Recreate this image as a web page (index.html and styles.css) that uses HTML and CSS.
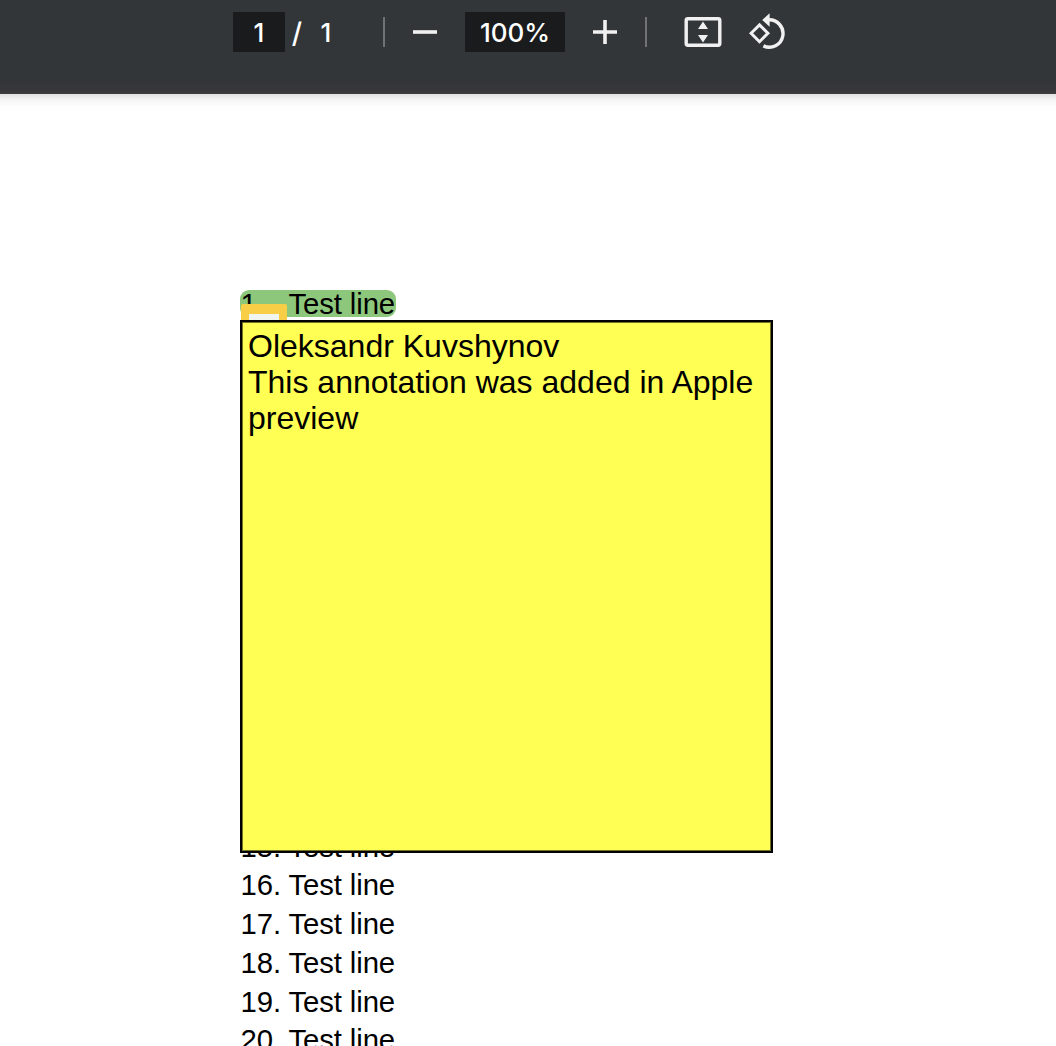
FILE: index.html
```
<!DOCTYPE html>
<html lang="en">
<head>
<meta charset="utf-8">
<title>PDF viewer</title>
<link rel="stylesheet" href="styles.css">
</head>
<body>
<header class="toolbar">
  <span class="field page-field">1</span>
  <span class="slash">/</span>
  <span class="page-total">1</span>
  <span class="separator separator-first"></span>
  <svg class="icon-minus" width="24" height="24" viewBox="0 0 24 24"><path d="M0 10.2h24v3.6H0z" fill="#f1f1f1"/></svg>
  <span class="field zoom-field">100%</span>
  <svg class="icon-plus" width="24" height="24" viewBox="0 0 24 24"><path d="M0 10.2h10.2V0h3.6v10.2H24v3.6H13.8V24h-3.6V13.8H0z" fill="#f1f1f1"/></svg>
  <span class="separator separator-second"></span>
  <svg class="icon-fit" width="38" height="30" viewBox="0 0 38 30"><rect x="2.2" y="1.8" width="33.6" height="26.4" rx="1.7" fill="none" stroke="#f1f1f1" stroke-width="3.4"/><path d="M19 4.5l5 7.5H14zM14 18h10l-5 7.5z" fill="#f1f1f1"/></svg>
  <svg class="icon-rotate" width="36" height="37" viewBox="0 0 36 37"><path d="M10.5 11.9l8.4 8.4-8.4 8.4-8.4-8.4z" fill="none" stroke="#f1f1f1" stroke-width="3"/><path d="M19 6.9A13.7 13.7 0 1 1 14.4 32.9" fill="none" stroke="#f1f1f1" stroke-width="3.4"/><path d="M20.6 .3v13.4l-7.4-6.6z" fill="#f1f1f1"/></svg>
</header>
<main class="document">
  <ol class="lines">
    <li><span class="number">1.</span>Test line</li>
    <li><span class="number">2.</span>Test line</li>
    <li><span class="number">3.</span>Test line</li>
    <li><span class="number">4.</span>Test line</li>
    <li><span class="number">5.</span>Test line</li>
    <li><span class="number">6.</span>Test line</li>
    <li><span class="number">7.</span>Test line</li>
    <li><span class="number">8.</span>Test line</li>
    <li><span class="number">9.</span>Test line</li>
    <li><span class="number">10.</span>Test line</li>
    <li><span class="number">11.</span>Test line</li>
    <li><span class="number">12.</span>Test line</li>
    <li><span class="number">13.</span>Test line</li>
    <li><span class="number">14.</span>Test line</li>
    <li><span class="number">15.</span>Test line</li>
    <li><span class="number">16.</span>Test line</li>
    <li><span class="number">17.</span>Test line</li>
    <li><span class="number">18.</span>Test line</li>
    <li><span class="number">19.</span>Test line</li>
    <li><span class="number">20.</span>Test line</li>
  </ol>
  <div class="highlight"></div>
  <div class="note-icon"></div>
  <aside class="note">Oleksandr Kuvshynov<br>This annotation was added in Apple preview</aside>
</main>
</body>
</html>
```
FILE: styles.css
```
* { box-sizing: border-box; }
html, body { height: 100%; }
body {
  margin: 0;
  overflow: hidden;
  display: flex;
  flex-direction: column;
  background: #fff;
  font-family: "Liberation Sans", Arial, sans-serif;
  color: #000;
}
.toolbar {
  flex: none;
  height: 94px;
  padding: 12px 0 0 233px;
  display: flex;
  align-items: flex-start;
  background: linear-gradient(#323639 0 82px, #38383a 91px, #403f40 94px);
  color: #fff;
  font: 500 26px/42px Inter, sans-serif;
}
.toolbar > * { flex: none; }
.field { height: 40px; background: #1a1b1d; text-align: center; }
.page-field { width: 52px; }
.slash { width: 18px; margin-left: 3px; text-align: center; font-size: 28px; line-height: 43px; }
.page-total { width: 18px; margin-left: 11px; text-align: center; }
.separator { width: 2px; height: 30px; margin-top: 5px; background: #707275; }
.separator-first { margin-left: 48px; }
.icon-minus { margin: 8px 0 0 28px; }
.zoom-field { width: 100px; margin-left: 28px; }
.icon-plus { margin: 8px 0 0 28px; }
.separator-second { margin-left: 28px; }
.icon-fit { margin: 5px 0 0 37px; }
.icon-rotate { margin: 1px 0 0 27px; }
.document {
  position: relative;
  flex: 1;
  min-height: 0;
  overflow: hidden;
  padding: 191px 0 0 240.5px;
  background: linear-gradient(#e2e2e2, #f5f5f5 6px, #fdfdfd 12px, #fff 17px) no-repeat;
}
.lines {
  position: relative;
  z-index: 1;
  margin: 0;
  padding: 0;
  list-style: none;
  font-size: 29.33px;
  letter-spacing: -.12px;
  line-height: 38.76px;
}
.lines li { display: flex; height: 38.76px; }
.number { width: 48px; }
.highlight {
  position: absolute;
  left: 240px;
  top: 196px;
  width: 156px;
  height: 27px;
  border-radius: 9px;
  background: #8dc77b;
}
.note-icon {
  position: absolute;
  z-index: 2;
  left: 241px;
  top: 210px;
  width: 46px;
  height: 30px;
  border: 8px solid #f7ce46;
  border-top-width: 10px;
  border-radius: 2px;
  background: #f0f5f0;
}
.note {
  position: absolute;
  z-index: 3;
  left: 240px;
  top: 226px;
  width: 533px;
  height: 533px;
  padding: 6px 4px 0 6px;
  border: 2px solid #000;
  box-shadow: inset 0 0 0 1px rgba(0, 0, 0, .55);
  background: #ffff54;
  font-size: 32px;
  line-height: 36px;
}
```
